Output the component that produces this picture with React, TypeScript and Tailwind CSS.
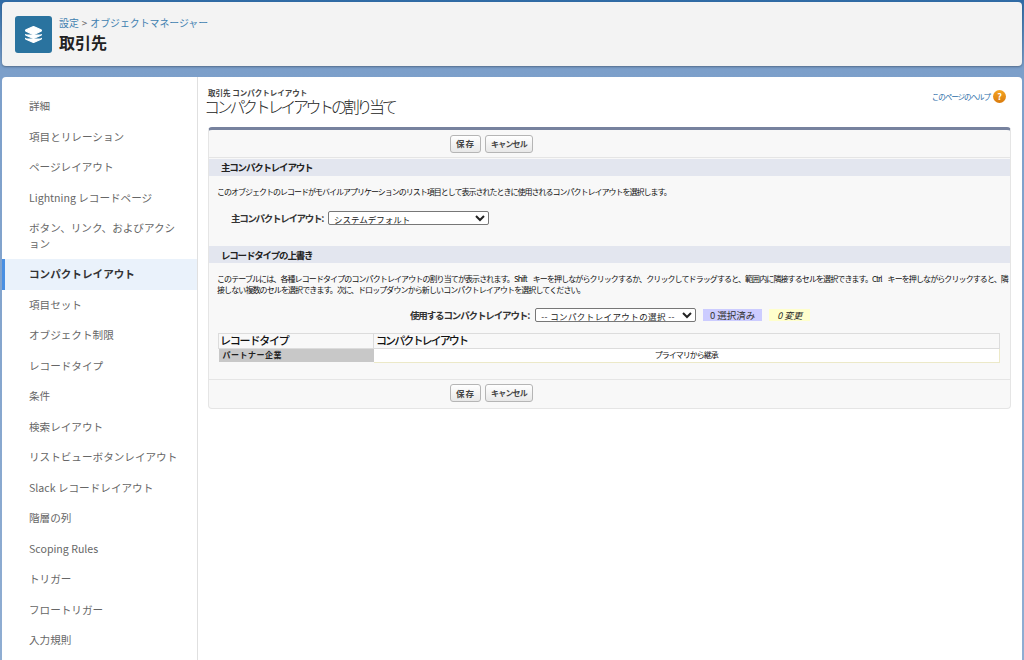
import { Layers } from "lucide-react";

const jp = "font-['Noto_Sans_CJK_JP','Noto_Sans',sans-serif]";

const navItems = [
  "詳細",
  "項目とリレーション",
  "ページレイアウト",
  "Lightning レコードページ",
  "ボタン、リンク、およびアクション",
  "コンパクトレイアウト",
  "項目セット",
  "オブジェクト制限",
  "レコードタイプ",
  "条件",
  "検索レイアウト",
  "リストビューボタンレイアウト",
  "Slack レコードレイアウト",
  "階層の列",
  "Scoping Rules",
  "トリガー",
  "フロートリガー",
  "入力規則",
];

const ButtonRow = () => (
  <div className="flex items-center gap-[4px] pl-[241px]">
    <button className="h-[18px] w-[31px] rounded-[3px] border border-[#b5b5b5] bg-gradient-to-b from-white to-[#e8e8e8] text-[8.5px] font-bold leading-none tracking-[1px] text-[#444]">
      保存
    </button>
    <button className="h-[18px] w-[48px] rounded-[3px] border border-[#b5b5b5] bg-gradient-to-b from-white to-[#e8e8e8] text-[8px] font-bold leading-none tracking-[-0.8px] text-[#444]">
      キャンセル
    </button>
  </div>
);

const SectionHeader = ({ title }: { title: string }) => (
  <div className="flex h-[17px] items-center bg-[#e3e6ef] pl-[12px] text-[9.5px] font-bold tracking-[-1.2px] text-[#222]">
    {title}
  </div>
);

export default function App() {
  return (
    <div className={`${jp} flex h-[660px] flex-col overflow-hidden bg-[linear-gradient(#2f6ba5,#7c9fca_70px,#8fadd2)] px-[2px] pt-[2px]`}>
      <header className="flex h-[64px] shrink-0 items-center rounded-[4px] bg-[#f3f3f3] pl-[13px] shadow-[0_1px_2px_rgba(0,0,0,0.3)]">
        <div className="flex h-[37px] w-[37px] items-center justify-center rounded-[3px] bg-[#2a739f]">
          <Layers size={19} fill="white" className="text-white" strokeWidth={1.5} />
        </div>
        <div className="ml-[7px]">
          <div className="flex items-center text-[9.9px] leading-[14px] text-[#3f7fb0]">
            設定<span className="mx-[3px] text-[#666]">&gt;</span>オブジェクトマネージャー
          </div>
          <div className="mt-[2px] text-[16px] font-bold leading-[20px] text-[#222]">取引先</div>
        </div>
      </header>

      <div className="mt-[11px] flex min-h-0 flex-1 rounded-t-[4px] bg-white">
        <nav className="w-[196px] shrink-0 border-r border-[#e0e0e0] pt-[14px]">
          {navItems.map((item) => {
            const active = item === "コンパクトレイアウト";
            return (
              <div
                key={item}
                className={`flex min-h-[30.5px] items-center border-l-[3px] pl-[24px] pr-[14px] text-[10.6px] leading-[16px] [line-break:loose] ${
                  active
                    ? "border-[#4a90e2] bg-[#eaf2fb] font-bold text-[#333]"
                    : "border-transparent text-[#666]"
                } ${item.startsWith("ボタン") ? "py-[7px]" : ""}`}
              >
                {item}
              </div>
            );
          })}
        </nav>

        <main className="min-w-0 flex-1 pl-[10px] pr-[11px] pt-[11px]">
          <div className="flex items-start justify-between">
            <div>
              <div className="text-[7.5px] font-bold leading-[9px] text-[#444]">取引先 コンパクトレイアウト</div>
              <h1 className="-ml-[4px] mt-[1px] text-[16px] font-light leading-[17px] tracking-[-3.3px] text-[#222]">
                コンパクトレイアウトの割り当て
              </h1>
            </div>
            <div className="mt-[2px] flex items-center gap-[3px] pr-[5px]">
              <span className="text-[7.5px] tracking-[-1px] text-[#2a6ca8]">このページのヘルプ</span>
              <span className="flex h-[13px] w-[13px] items-center justify-center rounded-full bg-gradient-to-b from-[#f5a623] to-[#d97a0c] text-[9px] font-bold leading-none text-white">
                ?
              </span>
            </div>
          </div>

          <section className="mt-[12px] h-[282px] rounded-[4px] border border-t-[3px] border-[#e5e5e5] border-t-[#77829e] bg-[#f8f8f8]">
            <div className="flex h-[28px] items-center border-b border-[#e5e5e5]">
              <ButtonRow />
            </div>
            <div className="pt-[1px]">
              <SectionHeader title="主コンパクトレイアウト" />
            </div>
            <p className="ml-[8px] mt-[11px] text-[8px] leading-[10px] tracking-[-1px] text-[#111]">
              このオブジェクトのレコードがモバイルアプリケーションのリスト項目として表示されたときに使用されるコンパクトレイアウトを選択します。
            </p>
            <div className="ml-[22px] mt-[14px] flex items-center gap-[5px]">
              <span className="text-[9.5px] font-bold tracking-[-1.3px] text-[#333]">主コンパクトレイアウト:</span>
              <select className="h-[14px] w-[161px] rounded-[2px] border border-[#777] bg-white py-0 pl-[1px] text-[8.5px] leading-[12px] text-[#222]">
                <option>システムデフォルト</option>
              </select>
            </div>

            <div className="mt-[21px]">
              <SectionHeader title="レコードタイプの上書き" />
            </div>
            <p className="ml-[8px] mt-[10px] w-[792px] text-[8px] leading-[11px] tracking-[-0.9px] [word-spacing:5px] text-[#111]">
              このテーブルには、各種レコードタイプのコンパクトレイアウトの割り当てが表示されます。Shift キーを押しながらクリックするか、クリックしてドラッグすると、範囲内に隣接するセルを選択できます。Ctrl キーを押しながらクリックすると、隣接しない複数のセルを選択できます。次に、ドロップダウンから新しいコンパクトレイアウトを選択してください。
            </p>
            <div className="ml-[201px] mt-[13px] flex items-center">
              <span className="text-[9.5px] font-bold tracking-[-1.13px] text-[#333]">使用するコンパクトレイアウト:</span>
              <select className="ml-[6px] h-[14px] w-[161px] rounded-[2px] border border-[#777] bg-white py-0 pl-[1px] text-[8.5px] leading-[12px] tracking-[0.4px] text-[#222]">
                <option>-- コンパクトレイアウトの選択 --</option>
              </select>
              <span className="ml-[7px] flex h-[12px] w-[59px] items-center justify-center bg-[#ccccff] text-[9.5px] text-[#333]">
                0 選択済み
              </span>
              <span className="ml-[7px] flex h-[12px] w-[41px] items-center justify-center bg-[#ffffcc] text-[9px] italic text-[#222]">
                0 変更
              </span>
            </div>

            <table className="ml-[9px] mt-[10px] w-[782px] table-fixed border-collapse">
              <thead>
                <tr className="h-[15px]">
                  <th className="w-[155px] border border-[#dcdcdc] pl-[1px] text-left text-[11px] font-medium leading-none tracking-[-1.2px] text-[#111]">レコードタイプ</th>
                  <th className="border border-[#dcdcdc] pl-[2px] text-left text-[11px] font-medium leading-none tracking-[-1.9px] text-[#111]">コンパクトレイアウト</th>
                </tr>
              </thead>
              <tbody>
                <tr className="h-[14px]">
                  <td className="bg-[#c8c8c8] pl-[4px] text-[8px] font-bold leading-none tracking-[0.5px] text-[#222]">パートナー企業</td>
                  <td className="border-b border-r border-[#ece9c8] bg-white text-center text-[8px] leading-none tracking-[-1px] text-[#111]">プライマリから継承</td>
                </tr>
              </tbody>
            </table>

            <div className="mt-[16px] flex h-[28px] items-center border-t border-[#e5e5e5]">
              <ButtonRow />
            </div>
          </section>
        </main>
      </div>
    </div>
  );
}
